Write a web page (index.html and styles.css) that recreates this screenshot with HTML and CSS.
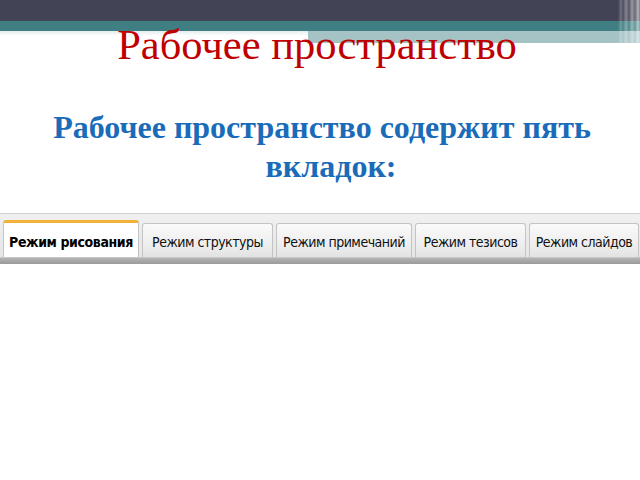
FILE: index.html
```html
<!DOCTYPE html>
<html lang="ru">
<head>
<meta charset="utf-8">
<title>Рабочее пространство</title>
<link rel="stylesheet" href="styles.css">
</head>
<body>
<div class="slide">
  <header class="head">
    <div class="band band-dark"></div>
    <div class="band band-teal"></div>
    <div class="band band-light"><span class="light-left"></span><span class="light-right"></span></div>
    <h1 class="title">Рабочее пространство</h1>
    <div class="edge"></div>
  </header>

  <p class="lead">Рабочее пространство содержит пять<br><span class="lead-tail">вкладок:</span></p>

  <div class="tabstrip">
    <div class="tabs">
      <div class="tab active tab-draw">Режим рисования</div>
      <div class="tab tab-outline">Режим структуры</div>
      <div class="tab tab-notes">Режим примечаний</div>
      <div class="tab tab-handout">Режим тезисов</div>
      <div class="tab tab-slides">Режим слайдов</div>
    </div>
    <div class="tabs-base"></div>
  </div>
</div>
</body>
</html>
```

FILE: styles.css
```css
html, body {
  margin: 0;
  padding: 0;
  background: #ffffff;
}

.slide {
  width: 640px;
  height: 480px;
  overflow: hidden;
  position: relative;
}

/* header bands with the title sitting over the lowest band */
.head {
  position: relative;
  display: grid;
  grid-template-rows: 21px 10px 12px auto;
}

.band-dark {
  grid-row: 1;
  grid-column: 1;
  background: #424455;
}

.band-teal {
  grid-row: 2;
  grid-column: 1;
  background: #3f7e82;
}

.band-light {
  grid-row: 3;
  grid-column: 1;
  display: flex;
}

.light-left {
  width: 308px;
  background: linear-gradient(#e4ecec, #ffffff 40%);
}

.light-right {
  flex: 1;
  background: #a5c3c5;
}

.title {
  grid-row: 3 / 5;
  grid-column: 1;
  margin: -10px 0 0;
  padding-right: 6px;
  text-align: center;
  font-family: "Liberation Serif", "Times New Roman", serif;
  font-weight: normal;
  font-size: 42.5px;
  line-height: 48px;
  color: #c00000;
  position: relative;
}

/* thin vertical stripes at the right end of the bands */
.edge {
  position: absolute;
  top: 0;
  right: 0;
  width: 22px;
  height: 43px;
  background: linear-gradient(90deg,
    rgba(255,255,255,0) 0px,
    rgba(255,255,255,0.25) 3px,
    rgba(255,255,255,0.05) 5px,
    rgba(255,255,255,0.35) 8px,
    rgba(255,255,255,0.1) 11px,
    rgba(255,255,255,0.45) 14px,
    rgba(255,255,255,0.2) 17px,
    rgba(255,255,255,0.6) 20px,
    rgba(255,255,255,0.3) 22px);
}

.lead {
  margin: 39px 0 0;
  padding-left: 4px;
  text-align: center;
  font-family: "Liberation Serif", "Times New Roman", serif;
  font-weight: bold;
  font-size: 32px;
  line-height: 39px;
  color: #1a6cb9;
}

.lead-tail {
  padding-left: 18px;
}

/* application tab strip */
.tabstrip {
  margin-top: 27px;
  background: linear-gradient(#f0f0f0, #e4e4e4);
  border-top: 1px solid #d0d0d0;
  padding-top: 6px;
}

.tabs {
  display: flex;
  gap: 3px;
  padding-left: 3px;
  align-items: flex-end;
}

.tab {
  box-sizing: border-box;
  flex: none;
  height: 34px;
  padding-top: 9px;
  border: 1px solid #c4c4c4;
  border-bottom: none;
  border-radius: 3px 3px 0 0;
  background: linear-gradient(#fafafa, #ececec 70%, #e2e2e2);
  font-family: "DejaVu Sans Condensed", "DejaVu Sans", sans-serif;
  font-stretch: condensed;
  font-size: 14px;
  letter-spacing: -0.5px;
  line-height: 18px;
  color: #111111;
  text-align: center;
  white-space: nowrap;
}

.tab-draw { width: 136px; }
.tab-outline { width: 131px; }
.tab-notes { width: 136px; }
.tab-handout { width: 111px; }
.tab-slides { width: 110px; }

.tab.active {
  height: 37px;
  padding-top: 10px;
  background: #ffffff;
  border-top: 3px solid #f3b33a;
  font-weight: bold;
  letter-spacing: -0.4px;
  color: #000000;
}

.tabs-base {
  height: 6px;
  border-top: 1px solid #c8c8c8;
  background: linear-gradient(#b4b4b4, #9a9a9a);
}
```
